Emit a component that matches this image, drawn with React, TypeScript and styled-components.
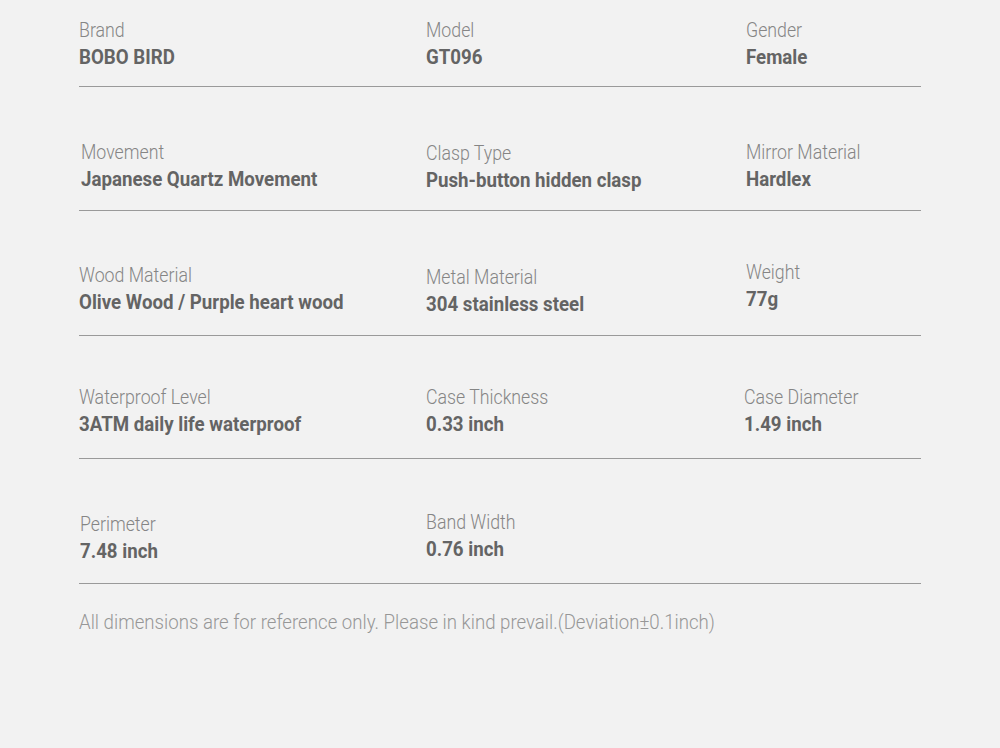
import React from 'react';
import styled, { createGlobalStyle } from 'styled-components';

const GlobalStyle = createGlobalStyle`
  html, body {
    margin: 0;
    padding: 0;
    background: #f2f2f2;
  }
  body {
    font-family: "Roboto", "Liberation Sans", sans-serif;
  }
`;

const Page = styled.div`
  width: 1000px;
  height: 748px;
  background: #f2f2f2;
  padding: 0 79px;
  box-sizing: border-box;
  overflow: hidden;
`;

const Row = styled.div<{ first?: boolean; lift?: number }>`
  display: grid;
  grid-template-columns: 347px 320px 1fr;
  padding-top: ${(p) => (p.first ? 17 : 53 - (p.lift || 0))}px;
  padding-bottom: ${(p) => 15 + (p.lift || 0)}px;
  border-bottom: 1px solid #9a9a9a;
`;

const Cell = styled.div<{ dx?: number; dy?: number }>`
  display: flex;
  flex-direction: column;
  align-items: flex-start;
  margin-left: ${(p) => p.dx || 0}px;
  margin-top: ${(p) => p.dy || 0}px;
`;

// narrow the glyphs to get the condensed look of the original type
const Condensed = styled.span<{ squeeze: number }>`
  display: inline-block;
  white-space: nowrap;
  transform: scaleX(${(p) => p.squeeze});
  transform-origin: left center;
`;

const Label = styled(Condensed)`
  font-size: 21px;
  line-height: 27px;
  font-weight: 300;
  color: #858585;
`;

const Value = styled(Condensed)`
  font-size: 21px;
  line-height: 27px;
  font-weight: 700;
  color: #646464;
`;

const Note = styled(Condensed)`
  display: block;
  margin: 25px 0 0;
  font-size: 21px;
  line-height: 27px;
  font-weight: 300;
  color: #979797;
`;

type Spec = { label: string; value: string; dx?: number; dy?: number };

const rows: { lift: number; cells: Spec[] }[] = [
  {
    lift: 0,
    cells: [
      { label: 'Brand', value: 'BOBO BIRD' },
      { label: 'Model', value: 'GT096' },
      { label: 'Gender', value: 'Female' },
    ],
  },
  {
    lift: 1,
    cells: [
      { label: 'Movement', value: 'Japanese Quartz Movement', dx: 2 },
      { label: 'Clasp Type', value: 'Push-button hidden clasp', dy: 1 },
      { label: 'Mirror Material', value: 'Hardlex' },
    ],
  },
  {
    lift: 2,
    cells: [
      { label: 'Wood Material', value: 'Olive Wood / Purple heart wood' },
      { label: 'Metal Material', value: '304 stainless steel', dy: 2 },
      { label: 'Weight', value: '77g', dy: -3 },
    ],
  },
  {
    lift: 5,
    cells: [
      { label: 'Waterproof Level', value: '3ATM daily life waterproof' },
      { label: 'Case Thickness', value: '0.33 inch' },
      { label: 'Case Diameter', value: '1.49 inch', dx: -2 },
    ],
  },
  {
    lift: 3,
    cells: [
      { label: 'Perimeter', value: '7.48 inch', dx: 1, dy: 2 },
      { label: 'Band Width', value: '0.76 inch' },
    ],
  },
];

export default function App() {
  return (
    <Page>
      <GlobalStyle />
      {rows.map((row, i) => (
        <Row key={i} first={i === 0} lift={row.lift}>
          {row.cells.map((c) => (
            <Cell key={c.label} dx={c.dx} dy={c.dy}>
              <Label squeeze={0.845}>{c.label}</Label>
              <Value squeeze={0.89}>{c.value}</Value>
            </Cell>
          ))}
        </Row>
      ))}
      <Note squeeze={0.888}>
        All dimensions are for reference only. Please in kind prevail.(Deviation±0.1inch)
      </Note>
    </Page>
  );
}
